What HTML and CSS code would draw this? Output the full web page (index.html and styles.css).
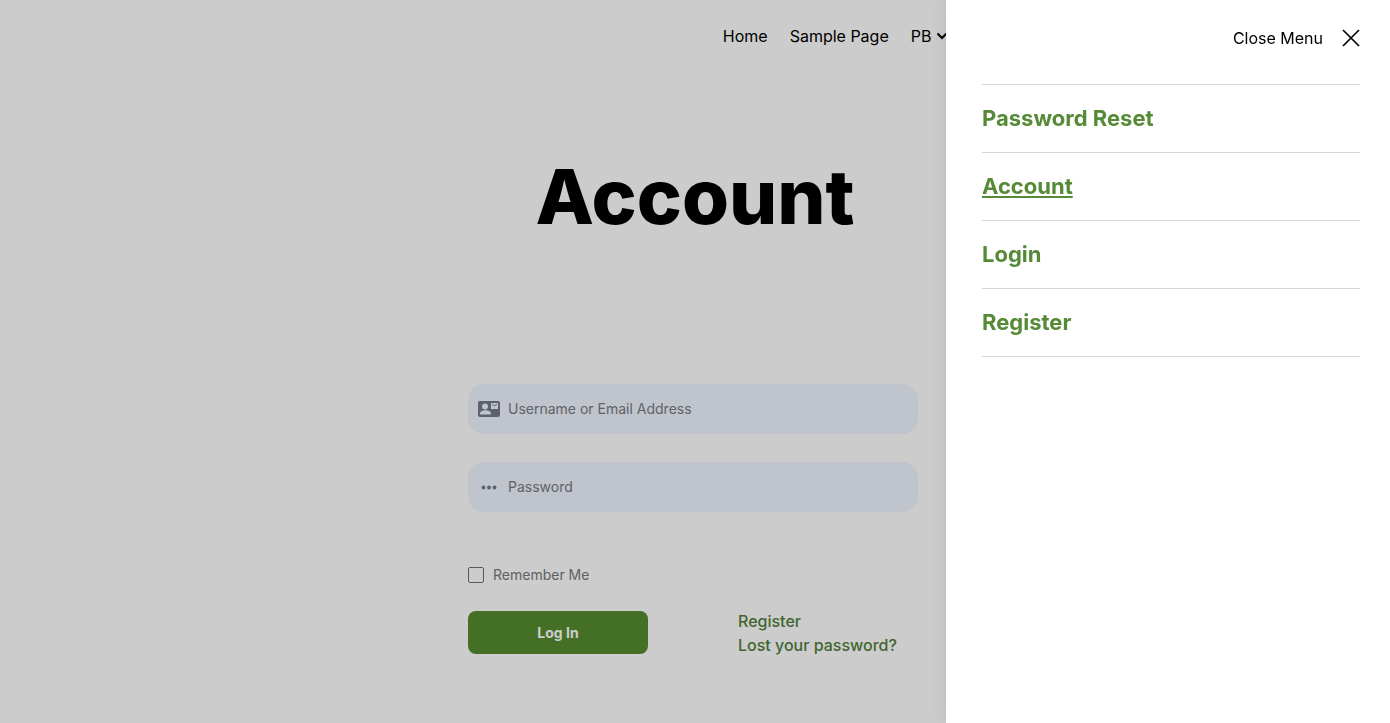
FILE: index.html
```
<!DOCTYPE html>
<html lang="en">
<head>
<meta charset="utf-8">
<meta name="viewport" content="width=device-width, initial-scale=1">
<title>Account</title>
<link rel="stylesheet" href="styles.css">
</head>
<body>
<div class="page">
  <header class="site-header">
    <nav class="site-nav" aria-label="Main">
      <a href="#">Home</a>
      <a href="#">Sample Page</a>
      <a href="#" class="has-children">PB
        <svg class="chevron" viewBox="0 0 12 8" aria-hidden="true"><path d="M1.500 1.500 6 6l4.500-4.500" fill="none" stroke="currentColor" stroke-width="2"/></svg>
      </a>
    </nav>
  </header>
  <main class="content">
    <h1 class="title">Account</h1>
    <form class="login-form">
      <label class="field">
        <svg class="field-icon" viewBox="0 0 22 16" aria-hidden="true">
          <path fill="currentColor" fill-rule="evenodd" d="M2 0h18a2 2 0 0 1 2 2v12a2 2 0 0 1-2 2H2a2 2 0 0 1-2-2V2a2 2 0 0 1 2-2zM7 2.500a3 3 0 1 0 0 6 3 3 0 0 0 0-6zM2 13.500h11v-1c0-2-3.500-3.200-5.500-3.200S2 10.500 2 12.500zM13 2v6h7V2z"/>
          <path d="m14 3 2.500 2L19 3" fill="none" stroke="currentColor"/>
        </svg>
        <input class="field-input" type="text" placeholder="Username or Email Address" aria-label="Username or Email Address">
      </label>
      <label class="field">
        <svg class="field-icon" viewBox="0 0 22 16" aria-hidden="true"><g fill="currentColor"><circle cx="5.500" cy="8.500" r="1.900"/><circle cx="11" cy="8.500" r="1.900"/><circle cx="16.500" cy="8.500" r="1.900"/></g></svg>
        <input class="field-input" type="password" placeholder="Password" aria-label="Password">
      </label>
      <label class="remember"><input class="checkbox" type="checkbox">Remember Me</label>
      <div class="actions">
        <button class="submit" type="submit">Log In</button>
        <div class="links">
          <a href="#">Register</a>
          <a href="#">Lost your password?</a>
        </div>
      </div>
    </form>
  </main>
</div>
<div class="overlay"></div>
<aside class="drawer">
  <button class="close" type="button">Close Menu
    <svg class="close-icon" viewBox="0 0 18 18" aria-hidden="true"><path d="m1 1 16 16M17 1 1 17" fill="none" stroke="currentColor" stroke-width="1.700"/></svg>
  </button>
  <nav aria-label="Expanded menu">
    <ul class="menu">
      <li><a href="#">Password Reset</a></li>
      <li><a href="#" class="current" aria-current="page">Account</a></li>
      <li><a href="#">Login</a></li>
      <li><a href="#">Register</a></li>
    </ul>
  </nav>
</aside>
</body>
</html>
```
FILE: styles.css
```
* { box-sizing: border-box; }
body {
  margin: 0;
  background: #fff;
  color: #000;
  font-family: Inter, "Liberation Sans", sans-serif;
  font-size: 16px;
  line-height: 24px;
}
a { color: inherit; text-decoration: none; }
button, input { font: inherit; }
.site-header { padding: 24px 0 24px 52%; }
.site-nav { display: flex; gap: 22px; white-space: nowrap; }
.has-children { display: flex; align-items: center; gap: 5px; }
.chevron { width: 12px; height: 8px; }
.content { padding: 78px 0; }
.title {
  margin: 0 0 142px;
  text-align: center;
  font-size: 76px;
  font-weight: 800;
  line-height: 92px;
}
.login-form {
  width: 100%;
  max-width: 454px;
  margin: 0 auto;
  padding-right: 4px;
}
.field {
  display: flex;
  align-items: center;
  gap: 8px;
  height: 50px;
  margin-bottom: 28px;
  padding: 0 10px;
  border-radius: 16px;
  background: #f1f5ff;
  color: #747a86;
}
.field-icon { flex: none; width: 22px; height: 16px; }
.field-input {
  flex: 1;
  min-width: 0;
  padding: 0;
  border: 0;
  outline: 0;
  background: transparent;
  font-size: 14px;
}
.field-input::placeholder { color: #777b7f; opacity: 1; }
.remember {
  display: flex;
  align-items: center;
  gap: 9px;
  margin-top: 51px;
  color: #777a7c;
  font-size: 14px;
}
.checkbox {
  appearance: none;
  width: 16px;
  height: 16px;
  margin: 0;
  border: 1px solid #6d7278;
  border-radius: 2px;
}
.actions {
  display: grid;
  grid-template-columns: 180px 1fr;
  gap: 90px;
  align-items: start;
  margin-top: 22px;
}
.submit {
  height: 43px;
  margin-top: 2px;
  border: 0;
  border-radius: 8px;
  background: #548c2f;
  color: #fff;
  font-size: 14px;
  font-weight: 700;
}
.links { display: flex; flex-direction: column; color: #51803c; font-weight: 500; }
.overlay { position: fixed; inset: 0; background: rgba(0, 0, 0, .2); }
.drawer {
  position: fixed;
  inset: 0 0 0 auto;
  width: 444px;
  max-width: 100%;
  padding: 26px 30px 0 36px;
  background: #fff;
  box-shadow: 0 0 16px rgba(0, 0, 0, .1);
}
.close {
  display: flex;
  align-items: center;
  gap: 19px;
  margin: 0 0 34px auto;
  padding: 0;
  border: 0;
  background: none;
  color: #000;
}
.close-icon { width: 18px; height: 18px; }
.menu {
  margin: 0;
  padding: 0;
  border-top: 1px solid #d6d6d6;
  list-style: none;
  color: #568a36;
  font-size: 22px;
  font-weight: 700;
  line-height: 27px;
}
.menu li { padding: 20px 0; border-bottom: 1px solid #d6d6d6; }
.menu .current { text-decoration: underline; }
```
